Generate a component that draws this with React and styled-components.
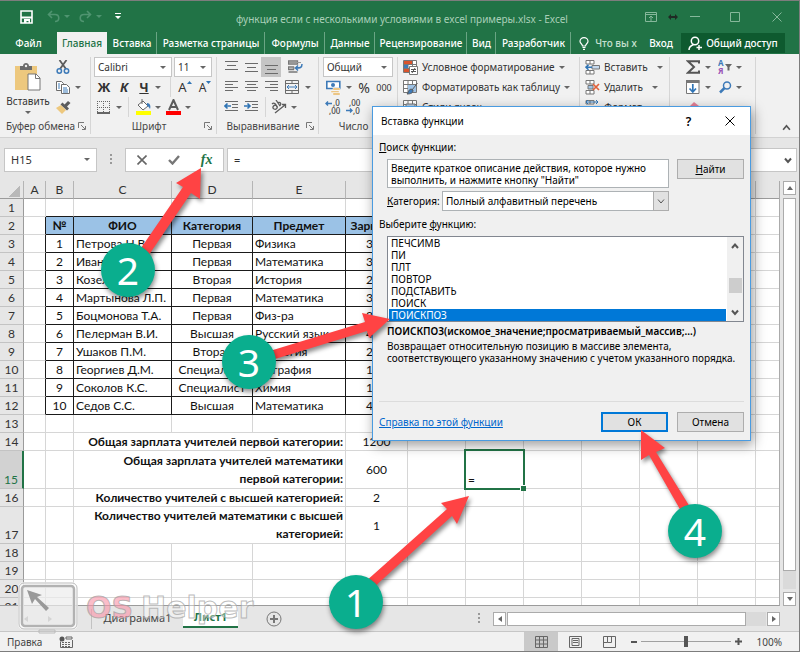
import React, { useState } from 'react';
import styled, { createGlobalStyle } from 'styled-components';

const GlobalStyle = createGlobalStyle`
  * {
    box-sizing: border-box;
  }

  body {
    margin: 0;
    font-family: 'Noto Sans', 'Open Sans', sans-serif;
    font-size: 10px;
    color: #333;
  }

  button, input, select, textarea {
    font: inherit;
    color: inherit;
    margin: 0;
    padding: 0;
  }
`;

const Window = styled.div`
  position: relative;
  display: flex;
  flex-direction: column;
  height: 100vh;
  overflow: hidden;
  background: #e6e6e6;
  border: 1px solid #7d7d7d;
  border-left: none;
`;

const PlainButton = styled.button`
  display: inline-flex;
  align-items: center;
  justify-content: center;
  border: none;
  background: none;
  white-space: nowrap;
`;

const Caret = styled.span`
  flex: none;
  margin-left: ${(p) => p.$gap || 0}px;
  border: 3px solid transparent;
  border-top-color: ${(p) => p.$color || '#666'};
  border-bottom: none;
`;

/* title bar */

const TitleBar = styled.header`
  display: grid;
  grid-template-columns: 1fr auto 1fr;
  align-items: center;
  height: 31px;
  padding: 0 15px 0 20px;
  background: #217346;
  color: #a9cfb8;
`;

const QuickAccess = styled.div`
  display: flex;
  align-items: center;
  gap: 4px;
`;

const QuickButton = styled(PlainButton)`
  width: ${(p) => p.$width || 14}px;
  height: 20px;
  margin-right: ${(p) => p.$after || 0}px;
  color: ${(p) => p.$color || '#4f9470'};
`;

const WindowButtons = styled.div`
  display: flex;
  align-items: center;
  justify-content: flex-end;
  gap: 10px;
`;

const TitleText = styled.div`
  white-space: nowrap;
  padding-top: 4px;
`;

/* ribbon tabs */

const TabBar = styled.nav`
  display: flex;
  align-items: stretch;
  height: 22px;
  background: #217346;
  color: #fff;
  font-weight: 500;
`;

const Tab = styled.button`
  height: 22px;
  width: ${(p) => p.$width}px;
  border: none;
  background: ${(p) => (p.$active ? '#f1f1f1' : 'none')};
  color: ${(p) => (p.$active ? '#217346' : '#fff')};
  font-weight: 500;
  white-space: nowrap;
  box-shadow: ${(p) => (p.$divided ? 'inset -1px 0 #6aa584' : 'none')};
`;

const TellMe = styled(PlainButton)`
  gap: 6px;
  width: 74px;
  color: #c6e0d0;
`;

const ShareButton = styled(PlainButton)`
  gap: 4px;
  width: 104px;
  margin: 1px 14px 1px auto;
  background: #0e5a2f;
  color: #fff;
  font-weight: 500;
`;

/* ribbon */

const Ribbon = styled.div`
  display: flex;
  height: 84px;
  padding: 3px 0;
  background: #f1f1f1;
  border-bottom: 1px solid #d2d2d2;
`;

const Group = styled.section`
  display: flex;
  flex-direction: column;
  flex: none;
  width: ${(p) => p.$width}px;
  border-right: 1px solid #d6d6d6;
`;

const GroupBody = styled.div`
  display: flex;
  flex: 1;
  padding-left: ${(p) => p.$pad || 4}px;
`;

const ToolRows = styled.div`
  display: flex;
  flex-direction: column;
`;

const ToolRow = styled.div`
  display: flex;
  align-items: center;
  height: 20px;
`;

const Tool = styled(PlainButton)`
  width: ${(p) => p.$width || 20}px;
  height: 20px;
  flex: none;
  gap: 4px;
  background: ${(p) => (p.$active ? '#c5c5c5' : 'none')};
`;

const SizeTool = styled(Tool)`
  gap: 0;

  svg {
    align-self: flex-start;
    margin-top: 4px;
  }
`;

const WideTool = styled(PlainButton)`
  height: 20px;
  gap: 4px;
`;

const ToolDivider = styled.span`
  width: 1px;
  height: 20px;
  margin: 0 4px;
  background: #d6d6d6;
`;

const GroupLabel = styled.div`
  display: flex;
  align-items: center;
  justify-content: space-between;
  height: 16px;
  padding: 0 4px 0 3px;
  color: #444;
  white-space: nowrap;

  span {
    flex: 1;
    text-align: center;
  }
`;

const PasteButton = styled(PlainButton)`
  flex-direction: column;
  gap: 3px;
  width: 50px;
  padding-top: 2px;
`;

const Combo = styled.select`
  width: ${(p) => p.$width}px;
  height: 20px;
  margin-right: 2px;
  padding-left: 3px;
  border: 1px solid #c6c6c6;
  border-radius: 0;
  appearance: none;
  background: #fff;
`;

const ComboWrap = styled.span`
  display: inline-flex;
  align-items: center;

  ${Caret} {
    margin-left: -14px;
    margin-right: 8px;
    pointer-events: none;
  }
`;

const Letter = styled.span`
  font-size: ${(p) => p.$size || 13}px;
  font-weight: ${(p) => (p.$light ? 400 : 700)};
  font-style: ${(p) => (p.$italic ? 'italic' : 'normal')};
  text-decoration: ${(p) => (p.$underline ? 'underline' : 'none')};
`;

const CollapseButton = styled(PlainButton)`
  align-self: flex-end;
  width: 16px;
  height: 14px;
  margin: 0 5px 0 auto;
`;

/* formula bar */

const FormulaBar = styled.div`
  display: flex;
  align-items: center;
  height: 43px;
  padding: 0 2px 0 4px;
  font-size: 11px;
`;

const Box = styled.div`
  display: flex;
  align-items: center;
  height: 24px;
  background: #fff;
  border: 1px solid #c6c6c6;
`;

const NameBox = styled(Box)`
  width: 93px;
  padding-right: 6px;
`;

const BoxInput = styled.input`
  flex: 1;
  min-width: 0;
  height: 22px;
  padding: 0 6px;
  border: none;
  outline: none;
  background: none;
`;

const Grip = styled.span`
  width: 2px;
  height: 12px;
  margin: 0 13px;
  margin-left: ${(p) => (p.$push ? 'auto' : '13px')};
  background: repeating-linear-gradient(#999 0 2px, transparent 2px 4px);
`;

const FormulaButtons = styled(Box)`
  width: 99px;
  margin-right: 3px;
  justify-content: space-around;
`;

const FormulaInput = styled(Box)`
  flex: 1;
  padding-right: 4px;
`;

const Fx = styled.span`
  font: italic bold 14px 'Liberation Serif', serif;
  color: #217346;
`;

/* sheet */

const Workspace = styled.main`
  display: flex;
  flex: 1;
  min-height: 0;
`;

const SheetArea = styled.div`
  flex: 1;
  min-width: 0;
  overflow: hidden;
  border-right: 1px solid #ababab;
  border-bottom: 1px solid #9b9b9b;
  background: #fff;
`;

const Grid = styled.table`
  width: 100%;
  min-width: 814px;
  table-layout: fixed;
  border-collapse: separate;
  border-spacing: 0;
  font-family: Lato, 'Noto Sans', sans-serif;
  font-size: 12px;
  line-height: 17px;
  color: #111;
`;

const ColHead = styled.th`
  height: 18px;
  padding: 0;
  background: #e6e6e6;
  border-right: 1px solid #b5b5b5;
  border-bottom: 1px solid #9b9b9b;
  font-weight: 400;
  color: #333;
`;

const Corner = styled(ColHead)`
  background: linear-gradient(135deg, transparent 50%, #b8b8b8 50%) no-repeat 8px 4px / 12px 12px #e6e6e6;
`;

const RowHead = styled.th`
  height: ${(p) => p.$height}px;
  padding: 0;
  vertical-align: bottom;
  background: ${(p) => (p.$active ? '#d2d2d2' : '#e6e6e6')};
  border-right: ${(p) => (p.$active ? '2px solid #217346' : '1px solid #9b9b9b')};
  border-bottom: 1px solid #c3c3c3;
  color: ${(p) => (p.$active ? '#217346' : '#333')};
  font-weight: 400;
`;

const Cell = styled.td`
  position: ${(p) => (p.$cursor ? 'relative' : 'static')};
  padding: 0 2px;
  white-space: ${(p) => (p.$wrap ? 'pre-line' : 'nowrap')};
  line-height: ${(p) => (p.$tall ? 18 : 17)}px;
  overflow: ${(p) => (p.$cursor ? 'visible' : 'hidden')};
  vertical-align: ${(p) => (p.$middle ? 'middle' : 'bottom')};
  text-align: ${(p) => p.$align || 'left'};
  font-weight: ${(p) => (p.$bold ? 700 : 400)};
  background: ${(p) => (p.$head ? '#9bc2e6' : 'none')};
  border-right: 1px solid ${(p) => (p.$dark || p.$darkRight ? '#1a1a1a' : '#d6d6d6')};
  border-bottom: 1px solid ${(p) => (p.$dark || p.$darkBottom ? '#1a1a1a' : '#d6d6d6')};
`;

const CellCursor = styled.span`
  position: absolute;
  inset: -2px;
  border: 2px solid #217346;

  &::after {
    content: '';
    position: absolute;
    right: -3px;
    bottom: -3px;
    width: 5px;
    height: 5px;
    background: #217346;
    border: solid #fff;
    border-width: 1px 0 0 1px;
  }
`;

const VerticalScroll = styled.div`
  display: flex;
  flex-direction: column;
  gap: 3px;
  width: 19px;
  padding: 0 3px;
`;

const ScrollButton = styled(PlainButton)`
  flex: none;
  width: 13px;
  height: 14px;
  background: #fff;
  border: 1px solid #ababab;
`;

const Triangle = styled.span`
  width: 0;
  height: 0;
  border: 3px solid transparent;
  ${(p) => (p.$up ? 'border-bottom: 4px solid #666; border-top: none;' : '')}
  ${(p) => (p.$down ? 'border-top: 4px solid #666; border-bottom: none;' : '')}
  ${(p) => (p.$left ? 'border-right: 4px solid #666; border-left: none;' : '')}
  ${(p) => (p.$right ? 'border-left: 4px solid #666; border-right: none;' : '')}
`;

const ScrollTrack = styled.div`
  flex: 1;
  padding-bottom: 18px;
  background: #dadada;
`;

const ScrollThumb = styled.div`
  height: 100%;
  background: #fff;
  border: 1px solid #ababab;
`;

/* sheet tabs */

const SheetBar = styled.div`
  display: flex;
  align-items: center;
  height: 25px;
  padding: 0 19px 0 24px;
  font-size: 11px;
`;

const SheetNav = styled.div`
  display: flex;
  align-items: center;
  gap: 20px;
  width: 68px;
  height: 20px;
  border-right: 1px solid #ababab;
  opacity: 0.6;
`;

const SheetTab = styled.button`
  align-self: stretch;
  width: ${(p) => p.$width}px;
  margin-bottom: 3px;
  border: none;
  border-bottom: ${(p) => (p.$active ? '2px solid #217346' : 'none')};
  background: ${(p) => (p.$active ? '#fff' : 'none')};
  color: ${(p) => (p.$active ? '#217346' : '#444')};
  font-weight: ${(p) => (p.$active ? 700 : 400)};
`;

const AddSheet = styled(PlainButton)`
  width: 16px;
  height: 16px;
  margin-left: 28px;
`;

const HorizontalScroll = styled.div`
  display: flex;
  gap: 1px;
  width: 287px;
`;

const HorizontalTrack = styled.div`
  flex: 1;
  padding-right: 20px;
  background: #dadada;
`;

/* status bar */

const StatusBar = styled.footer`
  display: flex;
  align-items: center;
  height: 20px;
  padding: 0 17px 0 7px;
  background: #f1f1f1;
  border-top: 1px solid #c6c6c6;
  color: #444;
`;

const ViewButtons = styled.div`
  display: flex;
  margin-left: auto;
`;

const ViewButton = styled(PlainButton)`
  width: 34px;
  height: 19px;
  background: ${(p) => (p.$active ? '#c9c9c9' : 'none')};
`;

const Zoom = styled.div`
  display: flex;
  align-items: center;
  gap: 4px;
  margin-left: 5px;
`;

const ZoomSlider = styled.input`
  width: 90px;
  height: 12px;
  appearance: none;
  background: linear-gradient(#a0a0a0, #a0a0a0) no-repeat center / 100% 1px;

  &::-webkit-slider-thumb {
    appearance: none;
    width: 4px;
    height: 11px;
    background: #555;
  }
`;

const ZoomValue = styled.span`
  width: 36px;
  text-align: right;
`;

/* function dialog */

const Dialog = styled.form`
  position: absolute;
  left: 372px;
  top: 105px;
  display: flex;
  flex-direction: column;
  width: 379px;
  height: 335px;
  background: #f0f0f0;
  border: 1px solid #4a9be0;
  box-shadow: 2px 4px 12px rgba(0, 0, 0, 0.4);
  color: #000;
`;

const DialogTitle = styled.div`
  display: flex;
  align-items: center;
  height: 28px;
  padding-left: 8px;
  background: #fff;

  span {
    flex: 1;
  }
`;

const DialogTitleButton = styled(PlainButton)`
  width: 41px;
  height: 28px;
  font-weight: 600;
  font-size: 12px;
`;

const DialogBody = styled.div`
  display: flex;
  flex-direction: column;
  flex: 1;
  padding: 4px 6px 8px;
`;

const FieldLabel = styled.label`
  height: 16px;
  line-height: 16px;
`;

const ListLabel = styled.div`
  height: 16px;
  margin-top: 5px;
  line-height: 16px;
`;

const SearchRow = styled.div`
  display: flex;
  align-items: flex-start;
  justify-content: space-between;
  margin: 4px 0 3px;
  padding-left: 8px;
`;

const SearchText = styled.textarea`
  width: 282px;
  height: 29px;
  padding: 2px 3px;
  border: 1px solid #adb2b5;
  outline: none;
  resize: none;
  overflow: hidden;
  line-height: 12px;
  background: #fff;
`;

const DialogButton = styled.button`
  width: 67px;
  height: 20px;
  background: #e1e1e1;
  border: ${(p) => (p.$primary ? '2px solid #0078d7' : '1px solid #adadad')};
`;

const CategoryRow = styled.div`
  display: flex;
  align-items: center;
  padding-left: 8px;
`;

const CategorySelect = styled.select`
  width: 227px;
  height: 20px;
  margin-left: auto;
  padding-left: 3px;
  border: 1px solid #adb2b5;
  border-radius: 0;
  appearance: none;
  background: #fff;
`;

const SelectArrow = styled.span`
  display: flex;
  align-items: center;
  justify-content: center;
  width: 16px;
  height: 20px;
  margin-left: -16px;
  margin-right: 75px;
  background: #e1e1e1;
  border: 1px solid #adadad;
  pointer-events: none;
`;

const ListFrame = styled.div`
  display: flex;
  margin: 4px 0 3px 8px;
  background: #fff;
  border: 1px solid #828790;
`;

const FunctionList = styled.ul`
  flex: 1;
  margin: 0;
  padding: 0 1px;
  list-style: none;
`;

const FunctionItem = styled.li`
  height: 12px;
  padding-left: 2px;
  line-height: 12px;
  background: ${(p) => (p.$selected ? '#0078d7' : 'none')};
  color: ${(p) => (p.$selected ? '#fff' : 'inherit')};
`;

const ListScroll = styled.div`
  display: flex;
  flex-direction: column;
  align-items: center;
  justify-content: space-between;
  width: 16px;
  padding: 5px 0;
  background: #f0f0f0;
`;

const ListThumb = styled.span`
  width: 13px;
  height: 15px;
  margin-top: 12px;
  background: #cdcdcd;
`;

const Signature = styled.strong`
  padding-left: 8px;
  font-weight: 600;
  line-height: 13px;
`;

const Description = styled.p`
  flex: 1;
  margin: 2px 0 0;
  padding-left: 8px;
  line-height: 12px;
`;

const DialogFooter = styled.div`
  display: flex;
  align-items: center;
  gap: 9px;
  padding-top: 10px;
  border-top: 1px solid #dcdcdc;
`;

const HelpLink = styled.a`
  margin-right: auto;
  color: #0066cc;
`;

/* steps drawn over the window */

const ArrowLayer = styled.svg`
  position: absolute;
  left: 0;
  top: 0;
  pointer-events: none;
  filter: drop-shadow(2px 3px 2px rgba(0, 0, 0, 0.45));
`;

const StepBadge = styled.div`
  position: absolute;
  left: ${(p) => p.$x - 27}px;
  top: ${(p) => p.$y - 27}px;
  width: 54px;
  height: 54px;
  border-radius: 50%;
  background: #0aae8e;
  box-shadow: 1px 3px 5px rgba(0, 0, 0, 0.45);
  color: #fff;
  font-size: 39px;
  line-height: 54px;
  text-align: center;
`;

const Watermark = styled.div`
  position: absolute;
  left: 18px;
  bottom: 17px;
  display: flex;
  align-items: center;
  gap: 8px;
  pointer-events: none;
`;

const WatermarkText = styled.span`
  font: bold 30px/36px 'DejaVu Sans', sans-serif;
  color: ${(p) => p.$color};
  -webkit-text-stroke: 1px rgba(160, 160, 160, 0.7);
`;

const Chevron = ({ up, size = 8, width = 2 }) => (
  <svg width={size} height={size} viewBox="0 0 8 8" fill="none" stroke="#555" strokeWidth={width}>
    <path d={up ? 'M1 6l3-3.5L7 6' : 'M1 2.5L4 6l3-3.5'} />
  </svg>
);

const SizeMark = ({ up }) => (
  <svg width="5" height="3" viewBox="0 0 5 3" fill="#2f74b5">
    <path d={up ? 'M0 3L2.5 0 5 3z' : 'M0 0h5L2.500 3z'} />
  </svg>
);

const Launcher = () => (
  <svg width="8" height="8" viewBox="0 0 8 8" fill="none" stroke="#777">
    <path d="M.5 6V.5H6M3 3l4 4M7.5 4v3.5H4" />
  </svg>
);

const SaveIcon = () => (
  <svg width="14" height="14" viewBox="0 0 14 14">
    <path d="M1 1h11v12H1z" fill="none" stroke="#fff" strokeWidth="1.6" />
    <path d="M1 6.5h11v2H1zM4 9h6v4H8.500v-2H6.500v2H4z" fill="#fff" />
  </svg>
);

const UndoIcon = ({ flip }) => (
  <svg width="13" height="13" viewBox="0 0 13 13" fill="none" stroke="currentColor" strokeWidth="1.6">
    <g transform={flip ? 'matrix(-1 0 0 1 13 0)' : undefined}>
      <path d="M5 1L1.500 4.500 5 8M2 4.500h6c5 0 5 7 0 7" />
    </g>
  </svg>
);

const ClipboardIcon = () => (
  <svg width="26" height="28" viewBox="0 0 26 28">
    <path d="M0 3h22v24H0z" fill="#edc87e" />
    <path d="M5 3h3c0-4 6-4 6 0h3v4H5z" fill="#6b6b6b" />
    <circle cx="11" cy="3" r="1.200" fill="#f1f1f1" />
    <path d="M13 11h8l4 4v12H13z" fill="#fff" stroke="#777" />
    <path d="M20.500 11v4.500H25" fill="none" stroke="#777" />
  </svg>
);

const CutIcon = () => (
  <svg width="14" height="14" viewBox="0 0 14 14" fill="none" strokeWidth="1.500">
    <path d="M3.500 0L10 9M10.500 0L4 9" stroke="#5c5c5c" strokeWidth="1.800" />
    <circle cx="3.300" cy="11" r="2.200" stroke="#3d7ab8" />
    <circle cx="10.500" cy="11" r="2.200" stroke="#3d7ab8" />
  </svg>
);

const CopyIcon = () => (
  <svg width="14" height="13" viewBox="0 0 14 13" fill="#fff" stroke="#6b6b6b">
    <path d="M.5.5h5l2 2v7h-7z" />
    <path d="M5.500 3.500h5l3 3v6h-8z" />
    <path d="M2 3h2M2 5h2M2 7h2M7 7h4M7 9h5M7 11h5" stroke="#3d7ab8" />
  </svg>
);

const BrushIcon = () => (
  <svg width="15" height="13" viewBox="0 0 15 13">
    <path d="M0 7l5-3 5 5-4 4z" fill="#edc87e" />
    <path d="M4.500 3.500l2-2 2 2L12 0l2.500 2L11 5.500l2 2-2 2z" fill="#5c5c5c" />
  </svg>
);

const BordersIcon = () => (
  <svg width="13" height="13" viewBox="0 0 13 13" fill="none" stroke="#666">
    <path d="M.5 0v12M6.500 0v12M12.500 0v12M0 .5h13M0 6.500h13" strokeDasharray="1 1" />
    <path d="M0 12h13" strokeWidth="2" />
  </svg>
);

const FillIcon = () => (
  <svg width="15" height="16" viewBox="0 0 15 16">
    <path d="M2 6l5-4 5 5-5 4z" fill="#fff" stroke="#666" />
    <path d="M6 0v5" stroke="#666" />
    <path d="M11 4c3 0 4 3 3 6-1-2-2-3-3-3z" fill="#3d7ab8" />
    <path d="M0 12h15v4H0z" fill="#ffff00" />
  </svg>
);

const FontColorIcon = () => (
  <svg width="15" height="16" viewBox="0 0 15 16">
    <path d="M3 11L7.500 1 12 11M5 8h5" fill="none" stroke="#5c5c5c" strokeWidth="2" />
    <path d="M0 12h15v4H0z" fill="#ff0000" />
  </svg>
);

// lines: list of [x, y, width]
const LinesIcon = ({ lines, children }) => (
  <svg width="14" height="14" viewBox="0 0 14 14" fill="none">
    {lines.map(([x, y, w]) => (
      <path key={y} d={`M${x} ${y + 0.5}h${w}`} stroke="#6b6b6b" />
    ))}
    {children}
  </svg>
);

const WrapIcon = () => (
  <svg width="15" height="15" viewBox="0 0 15 15" fill="none">
    <path d="M.5 1h9v3h-9zM.5 7h5v2.500h-5zM.5 12h9" stroke="#777" strokeWidth="1.300" />
    <path d="M1 2.500h12M1 8h6" stroke="#999" />
    <path d="M14 4c0 4-2 4-6 4M10 5.500L7.500 8l2.500 2.500" stroke="#3d7ab8" strokeWidth="1.500" />
  </svg>
);

const MergeIcon = () => (
  <svg width="14" height="14" viewBox="0 0 14 14" fill="none" stroke="#6b6b6b">
    <path d="M.5.5h13v13H.5zM0 3.500h14M0 10.500h14M7 0v3M7 11v3" />
    <path d="M2 7h10M4 5L2 7l2 2M10 5l2 2-2 2" stroke="#3d7ab8" />
  </svg>
);

const OrientationIcon = () => (
  <svg width="16" height="14" viewBox="0 0 16 14" fill="none" stroke="#5c5c5c" strokeWidth="1.300">
    <path d="M1 4c2-2 4 0 5 3M5 5c-3 0-4 3-2 4s4-1 3-3M5 0l4 6M6.500 3c2-2 5 1 2 3" />
    <path d="M4 13l10-8M11 4.500h3.500V8" />
  </svg>
);

const MoneyIcon = () => (
  <svg width="15" height="15" viewBox="0 0 15 15">
    <path d="M.8 1.500h13v7H.8z" fill="#fff" stroke="#3d7ab8" strokeWidth="1.600" />
    <circle cx="7" cy="5" r="2" fill="#3d7ab8" />
    <path d="M7 8h7v2H7zM5 11h8v1.500H5zM7 13h7v2H7z" fill="#e8b968" stroke="#fff" strokeWidth=".4" />
  </svg>
);

const DecimalIcon = ({ less }) => (
  <svg width="16" height="16" viewBox="0 0 16 16" fill="#444" fontFamily="Noto Sans, sans-serif" fontSize="8" fontWeight="500">
    <text x={less ? 4 : 8} y="7">{less ? ',00' : ',0'}</text>
    <text x={less ? 8 : 4} y="15">{less ? ',0' : ',00'}</text>
    <path
      d={less ? 'M1 11.500h6M5 9.500l2 2-2 2' : 'M1 4.500h6M3 2.500l-2 2 2 2'}
      fill="none"
      stroke="#3d7ab8"
      strokeWidth="1.400"
    />
  </svg>
);

const TableIcon = ({ kind }) => (
  <svg width="15" height="15" viewBox="0 0 15 15" fill="none" stroke="#777">
    <path d="M.5.5h13v12H.5zM0 4.500h14M0 8.500h14M5 0v13M9.500 0v13" fill="#fff" />
    {kind === 'rules' && (
      <>
        <path d="M1 1h8v3H1z" fill="#d9532c" stroke="none" />
        <path d="M1 5h4v3H1z" fill="#3d7ab8" stroke="none" />
        <path d="M1 9h5v3H1z" fill="#d9532c" stroke="none" />
        <path d="M6.500 6.500h8v8h-8z" fill="#fff" />
        <path d="M8 9.500h5M8 11.500h5M12 8l-3 5" stroke="#555" />
      </>
    )}
    {kind === 'format' && (
      <>
        <path d="M5 5h8v7H5z" fill="#9fc3e6" stroke="none" />
        <path d="M14.500 3L9 10M8 9c-3 1-2 3-4 5 4 0 6-1 6-4z" fill="#3d7ab8" stroke="#5c5c5c" />
      </>
    )}
    {kind === 'styles' && <path d="M3 4h9v6H3z" fill="#b9cfe4" />}
  </svg>
);

const CellsIcon = ({ kind }) => (
  <svg width="15" height="15" viewBox="0 0 15 15" fill="none" stroke="#777">
    <path d="M1 .5h8v3.500H1zM5 .5V4M1 10.500h8V14H1zM5 10.500V14" fill="#fff" />
    {kind === 'insert' && (
      <>
        <path d="M7 5.500h7.500V9H7z" fill="#c5d9ee" />
        <path d="M7 7.200H1M3.500 4.700L1 7.200l2.500 2.500" stroke="#2f74b5" strokeWidth="1.600" />
      </>
    )}
    {kind === 'delete' && (
      <>
        <path d="M3 5.500h5V9H3z" fill="#9fc3e6" />
        <path d="M8 4l6 6M14 4l-6 6" stroke="#e0603a" strokeWidth="1.700" />
      </>
    )}
    {kind === 'format' && <path d="M1 2h12M3 0L1 2l2 2M11 0l2 2-2 2" stroke="#2f74b5" />}
  </svg>
);

const SigmaIcon = () => (
  <svg width="14" height="14" viewBox="0 0 14 14" fill="none" stroke="#555" strokeWidth="2">
    <path d="M13 3.500V1.200H2L8 7l-6 5.700h11v-2.300" />
  </svg>
);

const SortIcon = () => (
  <svg width="14" height="16" viewBox="0 0 14 16" fontFamily="Noto Sans, sans-serif" fontSize="8" fontWeight="700">
    <text x="0" y="7" fill="#3d7ab8">А</text>
    <text x="0" y="15" fill="#9a54b5">Я</text>
    <path d="M7 5h7l-2.500 3v3.500h-2V8z" fill="#666" />
  </svg>
);

const FillDownIcon = () => (
  <svg width="14" height="14" viewBox="0 0 14 14" fill="none">
    <path d="M.5.5h12.500v13H.5z" fill="#fff" stroke="#777" />
    <path d="M0 1.500h13.500" stroke="#777" strokeWidth="3" />
    <path d="M6.800 4v8M3.500 8.500L6.800 12 10 8.500" stroke="#2f74b5" strokeWidth="1.700" />
  </svg>
);

const FindIcon = () => (
  <svg width="13" height="13" viewBox="0 0 13 13" fill="none" stroke="#3d7ab8">
    <circle cx="8" cy="4.500" r="3.500" strokeWidth="1.500" />
    <path d="M5.500 7L1 11.500" strokeWidth="2.500" />
  </svg>
);

const EraserIcon = () => (
  <svg width="14" height="12" viewBox="0 0 14 12">
    <path d="M2 7l6-6 5 4-6 6z" fill="#e58097" />
  </svg>
);

const BulbIcon = () => (
  <svg width="10" height="13" viewBox="0 0 10 13" fill="none" stroke="#fff" strokeWidth="1.200">
    <path d="M3.500 9C3.500 7 1 6.500 1 4.300a4 3.700 0 018 0C9 6.500 6.500 7 6.500 9zM3.500 10.500h3M4 12.300h2" />
  </svg>
);

const ShareIcon = () => (
  <svg width="14" height="15" viewBox="0 0 14 15" fill="none" stroke="#fff" strokeWidth="1.500">
    <circle cx="7" cy="5" r="3.700" />
    <path d="M1 14c0-3 2-4.500 4.500-5.500M11 9v5M8.500 11.500h5.500" />
  </svg>
);

const CrossIcon = ({ size = 10, color = 'currentColor', width = 1 }) => (
  <svg width={size} height={size} viewBox="0 0 10 10" stroke={color} strokeWidth={width}>
    <path d="M.5.5l9 9M9.500.5l-9 9" />
  </svg>
);

const tabs = [
  ['Файл', 57],
  ['Главная', 50],
  ['Вставка', 50, true],
  ['Разметка страницы', 108, true],
  ['Формулы', 60, true],
  ['Данные', 50, true],
  ['Рецензирование', 92, true],
  ['Вид', 29, true],
  ['Разработчик', 75, true],
];

const functions = ['ПЕЧСИМВ', 'ПИ', 'ПЛТ', 'ПОВТОР', 'ПОДСТАВИТЬ', 'ПОИСК', 'ПОИСКПОЗ'];

const teachers = [
  ['Петрова Н.В.', 'Первая', 'Физика', 300],
  ['Иванов А.А.', 'Первая', 'Математика', 300],
  ['Козел П.С.', 'Вторая', 'История', 200],
  ['Мартынова Л.П.', 'Первая', 'Математика', 300],
  ['Боцмонова Т.А.', 'Первая', 'Физ-ра', 300],
  ['Пелерман В.И.', 'Высшая', 'Русский язык', 400],
  ['Ушаков П.М.', 'Вторая', 'Биология', 200],
  ['Георгиев Д.М.', 'Специалист', 'География', 100],
  ['Соколов К.С.', 'Специалист', 'Химия', 100],
  ['Седов С.С.', 'Высшая', 'Математика', 400],
];

const totals = {
  14: ['Общая зарплата учителей первой категории:', 1200],
  15: ['Общая зарплата учителей математики\nпервой категории:', 600],
  16: ['Количество учителей с высшей категорией:', 2],
  17: ['Количество учителей математики с высшей\nкатегорией:', 1],
};

const columns = 'ABCDEFGHIJKLM'.split('');
// the last column takes the rest of the window
const columnWidths = [22, 28, 98, 81, 93, 62, 58, 58, 58, 58, 58, 58];
const rowHeights = { 15: 38, 17: 37 };
const rowNumbers = Array.from({ length: 21 }, (_, i) => i + 1);
const range = (from) => columns.slice(from);

const SheetRow = ({ number }) => {
  const total = totals[number];
  const teacher = teachers[number - 3];
  const inTable = number >= 2 && number <= 12;

  const renderCells = () => {
    if (number === 1) {
      return range(1).map((c, i) => <Cell key={c} $darkBottom={i < 5} />);
    }
    if (number === 2) {
      return ['№', 'ФИО', 'Категория', 'Предмет', 'Зарплата'].map((text) => (
        <Cell key={text} $dark $head $bold $align="center">{text}</Cell>
      ));
    }
    if (teacher) {
      return (
        <>
          <Cell $dark $align="center">{number - 2}</Cell>
          <Cell $dark>{teacher[0]}</Cell>
          <Cell $dark $align="center">{teacher[1]}</Cell>
          <Cell $dark>{teacher[2]}</Cell>
          <Cell $dark $align="center">{teacher[3]}</Cell>
        </>
      );
    }
    if (total) {
      return (
        <>
          <Cell />
          <Cell colSpan={3} $bold $wrap $tall={total[0].includes('\n')} $align="right">{total[0]}</Cell>
          <Cell $middle $align="center">{total[1]}</Cell>
        </>
      );
    }
    return range(1).map((c) => <Cell key={c} />);
  };

  return (
    <tr>
      <RowHead scope="row" $height={rowHeights[number] || 18} $active={number === 15}>{number}</RowHead>
      <Cell $darkRight={inTable} />
      {renderCells()}
      {(inTable || total) && range(6).map((c) => {
        const cursor = number === 15 && c === 'H';
        return (
          <Cell key={c} $cursor={cursor}>
            {cursor && <>=<CellCursor /></>}
          </Cell>
        );
      })}
    </tr>
  );
};

const Sheet = () => (
  <SheetArea>
    <Grid>
      <colgroup>
        <col width="24" />
        {columns.map((c, i) => <col key={c} width={columnWidths[i]} />)}
      </colgroup>
      <thead>
        <tr>
          <Corner aria-label="Выделить все" />
          {columns.map((c) => <ColHead key={c} scope="col">{c}</ColHead>)}
        </tr>
      </thead>
      <tbody>
        {rowNumbers.map((n) => <SheetRow key={n} number={n} />)}
      </tbody>
    </Grid>
  </SheetArea>
);

const ComboBox = ({ label, value, width }) => (
  <ComboWrap>
    <Combo aria-label={label} $width={width} defaultValue={value}>
      <option>{value}</option>
    </Combo>
    <Caret />
  </ComboWrap>
);

const HomeRibbon = () => (
  <Ribbon>
    <Group $width={91}>
      <GroupBody $pad={3}>
        <PasteButton><ClipboardIcon />Вставить<Caret /></PasteButton>
        <ToolRows>
          <ToolRow><Tool $width={20} aria-label="Вырезать"><CutIcon /></Tool></ToolRow>
          <ToolRow><Tool $width={30} aria-label="Копировать"><CopyIcon /><Caret $gap={1} /></Tool></ToolRow>
          <ToolRow><Tool $width={20} aria-label="Формат по образцу"><BrushIcon /></Tool></ToolRow>
        </ToolRows>
      </GroupBody>
      <GroupLabel><span>Буфер обмена</span><Launcher /></GroupLabel>
    </Group>

    <Group $width={126}>
      <GroupBody $pad={3}>
        <ToolRows>
          <ToolRow>
            <ComboBox label="Шрифт" value="Calibri" width={78} />
            <ComboBox label="Размер" value="11" width={38} />
          </ToolRow>
          <ToolRow>
            <Tool aria-label="Полужирный"><Letter>Ж</Letter></Tool>
            <Tool aria-label="Курсив"><Letter $italic>К</Letter></Tool>
            <Tool $width={32} aria-label="Подчеркнутый"><Letter $underline>Ч</Letter><Caret $gap={2} /></Tool>
            <ToolDivider />
            <SizeTool aria-label="Увеличить"><Letter $light>A</Letter><SizeMark up /></SizeTool>
            <SizeTool aria-label="Уменьшить"><Letter $light $size={12}>A</Letter><SizeMark /></SizeTool>
          </ToolRow>
          <ToolRow>
            <Tool $width={30} aria-label="Границы"><BordersIcon /><Caret $gap={2} /></Tool>
            <ToolDivider />
            <Tool $width={30} aria-label="Заливка"><FillIcon /><Caret /></Tool>
            <Tool $width={30} aria-label="Цвет текста"><FontColorIcon /><Caret /></Tool>
          </ToolRow>
        </ToolRows>
      </GroupBody>
      <GroupLabel><span>Шрифт</span><Launcher /></GroupLabel>
    </Group>

    <Group $width={102}>
      <GroupBody>
        <ToolRows>
          <ToolRow>
            <Tool aria-label="По верхнему краю"><LinesIcon lines={[[1, 1, 13], [3, 5, 9], [1, 9, 13]]} /></Tool>
            <Tool aria-label="По середине"><LinesIcon lines={[[1, 3, 13], [3, 7, 9], [1, 11, 13]]} /></Tool>
            <Tool $active aria-label="По нижнему краю"><LinesIcon lines={[[1, 5, 13], [3, 9, 9], [1, 13, 13]]} /></Tool>
            <Tool $width={28} aria-label="Перенести текст"><WrapIcon /></Tool>
          </ToolRow>
          <ToolRow>
            <Tool aria-label="По левому краю"><LinesIcon lines={[[1, 1, 13], [1, 4, 8], [1, 7, 13], [1, 10, 8]]} /></Tool>
            <Tool aria-label="По центру"><LinesIcon lines={[[1, 1, 13], [3, 4, 9], [1, 7, 13], [3, 10, 9]]} /></Tool>
            <Tool aria-label="По правому краю"><LinesIcon lines={[[1, 1, 13], [6, 4, 8], [1, 7, 13], [6, 10, 8]]} /></Tool>
            <Tool $width={34} aria-label="Объединить"><MergeIcon /><Caret $gap={2} /></Tool>
          </ToolRow>
          <ToolRow>
            <Tool aria-label="Уменьшить отступ">
              <LinesIcon lines={[[1, 1, 13], [8, 4, 6], [8, 7, 6], [1, 10, 13]]}>
                <path d="M7 6H1M3.500 3.500L1 6l2.500 2.500" stroke="#2f74b5" strokeWidth="1.600" />
              </LinesIcon>
            </Tool>
            <Tool aria-label="Увеличить отступ">
              <LinesIcon lines={[[1, 1, 13], [8, 4, 6], [8, 7, 6], [1, 10, 13]]}>
                <path d="M0 6h6M3.500 3.500L6 6 3.500 8.500" stroke="#2f74b5" strokeWidth="1.600" />
              </LinesIcon>
            </Tool>
            <ToolDivider />
            <Tool $width={28} aria-label="Ориентация"><OrientationIcon /><Caret /></Tool>
          </ToolRow>
        </ToolRows>
      </GroupBody>
      <GroupLabel><span>Выравнивание</span><Launcher /></GroupLabel>
    </Group>

    <Group $width={79}>
      <GroupBody>
        <ToolRows>
          <ToolRow><ComboBox label="Числовой формат" value="Общий" width={70} /></ToolRow>
          <ToolRow>
            <Tool $width={31} aria-label="Финансовый формат"><MoneyIcon /><Caret $gap={1} /></Tool>
            <Tool aria-label="Процентный формат"><Letter $light $size={14}>%</Letter></Tool>
            <Tool aria-label="Формат с разделителями"><Letter $light $size={9}>000</Letter></Tool>
          </ToolRow>
          <ToolRow>
            <Tool aria-label="Увеличить разрядность"><DecimalIcon /></Tool>
            <Tool aria-label="Уменьшить разрядность"><DecimalIcon less /></Tool>
          </ToolRow>
        </ToolRows>
      </GroupBody>
      <GroupLabel><span>Число</span><Launcher /></GroupLabel>
    </Group>

    <Group $width={182}>
      <GroupBody $pad={5}>
        <ToolRows>
          <ToolRow><WideTool><TableIcon kind="rules" />Условное форматирование<Caret /></WideTool></ToolRow>
          <ToolRow><WideTool><TableIcon kind="format" />Форматировать как таблицу<Caret /></WideTool></ToolRow>
          <ToolRow><WideTool><TableIcon kind="styles" />Стили ячеек<Caret /></WideTool></ToolRow>
        </ToolRows>
      </GroupBody>
      <GroupLabel><span>Стили</span></GroupLabel>
    </Group>

    <Group $width={90}>
      <GroupBody $pad={5}>
        <ToolRows>
          <ToolRow><WideTool><CellsIcon kind="insert" />Вставить<Caret $gap={5} /></WideTool></ToolRow>
          <ToolRow><WideTool><CellsIcon kind="delete" />Удалить<Caret $gap={5} /></WideTool></ToolRow>
          <ToolRow><WideTool><CellsIcon kind="format" />Формат<Caret $gap={5} /></WideTool></ToolRow>
        </ToolRows>
      </GroupBody>
      <GroupLabel><span>Ячейки</span></GroupLabel>
    </Group>

    <Group $width={86}>
      <GroupBody $pad={12}>
        <ToolRows>
          <ToolRow>
            <Tool $width={32} aria-label="Автосумма"><SigmaIcon /><Caret $gap={1} /></Tool>
            <Tool $width={32} aria-label="Сортировка и фильтр"><SortIcon /><Caret /></Tool>
          </ToolRow>
          <ToolRow>
            <Tool $width={32} aria-label="Заполнить"><FillDownIcon /><Caret $gap={1} /></Tool>
            <Tool $width={32} aria-label="Найти и выделить"><FindIcon /><Caret /></Tool>
          </ToolRow>
          <ToolRow>
            <Tool $width={32} aria-label="Очистить"><EraserIcon /><Caret /></Tool>
          </ToolRow>
        </ToolRows>
      </GroupBody>
      <GroupLabel><span>Правка</span></GroupLabel>
    </Group>

    <CollapseButton aria-label="Свернуть ленту"><Chevron up size={9} width={1.5} /></CollapseButton>
  </Ribbon>
);

const FunctionDialog = () => {
  const [selected, setSelected] = useState('ПОИСКПОЗ');

  return (
    <Dialog onSubmit={(e) => e.preventDefault()}>
      <DialogTitle>
        <span>Вставка функции</span>
        <DialogTitleButton type="button">?</DialogTitleButton>
        <DialogTitleButton type="button" aria-label="Закрыть"><CrossIcon /></DialogTitleButton>
      </DialogTitle>
      <DialogBody>
        <FieldLabel htmlFor="search"><u>П</u>оиск функции:</FieldLabel>
        <SearchRow>
          <SearchText
            id="search"
            defaultValue={'Введите краткое описание действия, которое нужно\nвыполнить, и нажмите кнопку "Найти"'}
          />
          <DialogButton type="button"><u>Н</u>айти</DialogButton>
        </SearchRow>
        <CategoryRow>
          <label htmlFor="category"><u>К</u>атегория:</label>
          <CategorySelect id="category">
            <option>Полный алфавитный перечень</option>
          </CategorySelect>
          <SelectArrow><Chevron width={1} /></SelectArrow>
        </CategoryRow>
        <ListLabel id="functions-label">Выберите <u>ф</u>ункцию:</ListLabel>
        <ListFrame>
          <FunctionList role="listbox" aria-labelledby="functions-label">
            {functions.map((name) => (
              <FunctionItem
                key={name}
                role="option"
                aria-selected={name === selected}
                $selected={name === selected}
                onClick={() => setSelected(name)}
              >
                {name}
              </FunctionItem>
            ))}
          </FunctionList>
          <ListScroll><Chevron up /><ListThumb /><Chevron /></ListScroll>
        </ListFrame>
        <Signature>ПОИСКПОЗ(искомое_значение;просматриваемый_массив;...)</Signature>
        <Description>
          Возвращает относительную позицию в массиве элемента,
          соответствующего указанному значению с учетом указанного порядка.
        </Description>
        <DialogFooter>
          <HelpLink href="#help">Справка по этой функции</HelpLink>
          <DialogButton $primary type="submit">ОК</DialogButton>
          <DialogButton type="button">Отмена</DialogButton>
        </DialogFooter>
      </DialogBody>
    </Dialog>
  );
};

const Steps = () => (
  <>
    <ArrowLayer width="800" height="652" viewBox="0 0 800 652" fill="#ff4344">
      <path d="M201 167l-25 15 7 4-53 77 8 7 53-78 9 6z" />
      <path d="M390 318l-28-6 3 9-92 28 2 9 92-28 2 7z" />
      <path d="M469 495l-28 7 6 6-82 73 7 7 80-73 5 8z" />
      <path d="M641 429v30l8-5 32 56 9-4-34-55 9-4z" />
    </ArrowLayer>
    <StepBadge $x={356} $y={601}>1</StepBadge>
    <StepBadge $x={128} $y={269}>2</StepBadge>
    <StepBadge $x={249} $y={361}>3</StepBadge>
    <StepBadge $x={695} $y={530}>4</StepBadge>
  </>
);

const App = () => {
  const [tab, setTab] = useState('Главная');

  return (
    <Window>
      <GlobalStyle />
      <TitleBar>
        <QuickAccess>
          <QuickButton aria-label="Сохранить" $after={8}><SaveIcon /></QuickButton>
          <QuickButton aria-label="Отменить" $width={24} $after={4}><UndoIcon /><Caret $gap={4} $color="#4f9470" /></QuickButton>
          <QuickButton aria-label="Вернуть" $width={24} $after={5}><UndoIcon flip /><Caret $gap={4} $color="#4f9470" /></QuickButton>
          <QuickButton aria-label="Настройка панели">
            <svg width="6" height="7" viewBox="0 0 6 7" fill="#fff"><path d="M0 0h6v1H0zM0 3h6L3 6z" /></svg>
          </QuickButton>
        </QuickAccess>
        <TitleText>функция если с несколькими условиями в excel примеры.xlsx - Excel</TitleText>
        <WindowButtons>
          <QuickButton aria-label="Параметры ленты" $color="#86b89b">
            <svg width="12" height="10" viewBox="0 0 12 10" fill="none" stroke="currentColor">
              <path d="M.5.5h11v9H.5zM0 2.500h12M6 9V4M4 6l2-2 2 2" />
            </svg>
          </QuickButton>
          <svg width="10" height="8" viewBox="0 0 10 8" fill="#1f2a24"><path d="M0 4l3-3v2h4V1l3 3-3 3V5H3v2z" /></svg>
          <QuickButton aria-label="Свернуть" $color="#86b89b" $after={16}>
            <svg width="10" height="2" viewBox="0 0 10 2" fill="currentColor"><path d="M0 0h10v1H0z" /></svg>
          </QuickButton>
          <QuickButton aria-label="Развернуть" $color="#86b89b" $after={18}>
            <svg width="10" height="10" viewBox="0 0 10 10" fill="none" stroke="currentColor"><path d="M.5.5h9v9h-9z" /></svg>
          </QuickButton>
          <QuickButton aria-label="Закрыть" $color="#86b89b"><CrossIcon /></QuickButton>
        </WindowButtons>
      </TitleBar>

      <TabBar>
        {tabs.map(([name, width, divided]) => (
          <Tab key={name} $width={width} $divided={divided} $active={name === tab} onClick={() => setTab(name)}>
            {name}
          </Tab>
        ))}
        <TellMe><BulbIcon />Что вы х</TellMe>
        <Tab $width={32}>Вход</Tab>
        <ShareButton><ShareIcon />Общий доступ</ShareButton>
      </TabBar>

      <HomeRibbon />

      <FormulaBar>
        <NameBox><BoxInput aria-label="Имя" defaultValue="H15" /><Caret /></NameBox>
        <Grip />
        <FormulaButtons>
          <PlainButton aria-label="Отмена"><CrossIcon color="#666" width={1.6} /></PlainButton>
          <PlainButton aria-label="Ввод">
            <svg width="12" height="10" viewBox="0 0 12 10" fill="none" stroke="#777" strokeWidth="2.4"><path d="M1 5l3.500 3.500L11 1" /></svg>
          </PlainButton>
          <PlainButton aria-label="Вставить функцию"><Fx>fx</Fx></PlainButton>
        </FormulaButtons>
        <FormulaInput>
          <BoxInput aria-label="Строка формул" defaultValue="=" />
          <PlainButton aria-label="Развернуть строку формул"><Chevron /></PlainButton>
        </FormulaInput>
      </FormulaBar>

      <Workspace>
        <Sheet />
        <VerticalScroll>
          <ScrollButton aria-label="Вверх"><Triangle $up /></ScrollButton>
          <ScrollTrack><ScrollThumb /></ScrollTrack>
          <ScrollButton aria-label="Вниз"><Triangle $down /></ScrollButton>
        </VerticalScroll>
      </Workspace>

      <SheetBar>
        <SheetNav><Triangle $left /><Triangle $right /></SheetNav>
        <SheetTab $width={91}>Диаграмма1</SheetTab>
        <SheetTab $width={55} $active>Лист1</SheetTab>
        <AddSheet aria-label="Новый лист">
          <svg width="16" height="16" viewBox="0 0 16 16" fill="none" stroke="#777">
            <circle cx="8" cy="8" r="7" />
            <path d="M8 4v8M4 8h8" strokeWidth="2" />
          </svg>
        </AddSheet>
        <Grip $push />
        <HorizontalScroll>
          <ScrollButton aria-label="Влево"><Triangle $left /></ScrollButton>
          <HorizontalTrack><ScrollThumb /></HorizontalTrack>
          <ScrollButton aria-label="Вправо"><Triangle $right /></ScrollButton>
        </HorizontalScroll>
      </SheetBar>

      <StatusBar>
        Правка
        <svg width="48" height="12" viewBox="0 0 48 12">
          <circle cx="20" cy="3" r="2.500" fill="#555" />
          <path d="M24 1h6v2h-6zM18.500 5.500V11.500h12V4" fill="none" stroke="#666" />
          <path d="M20 6.500h9M20 8.500h9M20 10.500h9" stroke="#666" strokeDasharray="2 1" />
        </svg>
        <ViewButtons>
          <ViewButton $active aria-label="Обычный">
            <svg width="13" height="12" viewBox="0 0 13 12" fill="none" stroke="#666"><path d="M.5.5h12v11H.5zM0 4h13M0 8h13M4.500 0v12M8.500 0v12" /></svg>
          </ViewButton>
          <ViewButton aria-label="Разметка страницы">
            <svg width="13" height="12" viewBox="0 0 13 12" fill="none" stroke="#666"><path d="M.5.5h12v11H.5zM3 2.500h7v7H3zM4 4.500h5M4 6.500h5" /></svg>
          </ViewButton>
          <ViewButton aria-label="Страничный режим">
            <svg width="13" height="12" viewBox="0 0 13 12" fill="none" stroke="#666"><path d="M.5.5h12v11H.5zM4.500 0v6.500h4V0M.5 6.500h4" /></svg>
          </ViewButton>
        </ViewButtons>
        <Zoom>
          <PlainButton aria-label="Уменьшить"><svg width="6" height="8" viewBox="0 0 6 8"><path d="M0 3h6v2H0z" fill="#555" /></svg></PlainButton>
          <ZoomSlider type="range" min="0" max="200" defaultValue="100" aria-label="Масштаб" />
          <PlainButton aria-label="Увеличить"><svg width="7" height="7" viewBox="0 0 7 7"><path d="M0 2.500h7v2H0zM2.500 0h2v7h-2z" fill="#555" /></svg></PlainButton>
          <ZoomValue>100%</ZoomValue>
        </Zoom>
      </StatusBar>

      <Watermark>
        <svg width="60" height="52" viewBox="0 0 60 52" fill="none">
          <rect x="3" y="3" width="54" height="42" rx="3" stroke="#fff" strokeWidth="6" opacity=".8" />
          <rect x="4" y="4" width="52" height="40" rx="3" fill="#ececec" fillOpacity=".7" stroke="#b2b2b2" strokeWidth="2.500" />
          <rect x="1" y="1" width="58" height="46" rx="5" stroke="#bbb" />
          <path d="M21 48h16v3H21z" stroke="#bbb" />
          <path d="M9 8l15 5-5 2 12 11-3 3-11-12-3 5z" fill="#999" />
        </svg>
        <WatermarkText $color="rgba(250, 150, 170, 0.65)">OS</WatermarkText>
        <WatermarkText $color="rgba(255, 255, 255, 0.4)">Helper</WatermarkText>
      </Watermark>

      <FunctionDialog />
      <Steps />
    </Window>
  );
};

export default App;
